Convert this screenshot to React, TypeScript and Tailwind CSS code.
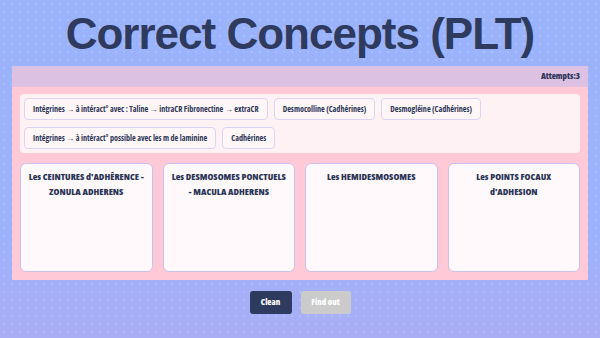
const poolItems = [
  'Intégrines → à intéract° avec : Taline → intraCR Fibronectine → extraCR',
  'Desmocolline (Cadhérines)',
  'Desmogléine (Cadhérines)',
  'Intégrines → à intéract° possible avec les m de laminine',
  'Cadhérines',
];

const targets = [
  "Les CEINTURES d'ADHÊRENCE - ZONULA ADHERENS",
  'Les DESMOSOMES PONCTUELS - MACULA ADHERENS',
  'Les HEMIDESMOSOMES',
  "Les POINTS FOCAUX d'ADHESION",
];

export default function App() {
  return (
    <div className="min-h-[338px] w-full bg-[radial-gradient(circle,rgba(255,255,255,0.14)_1.2px,transparent_1.6px),linear-gradient(to_bottom,#9ab3fd,#9db2fc_70%,#aaaef4)] bg-[length:8px_8px,100%_100%] pt-3 pb-5 font-['Open_Sans',sans-serif] font-stretch-condensed text-[#2b3556]">
      <h1 className="text-center font-['Liberation_Sans',Arial,sans-serif] text-[44px] font-bold leading-[44px] tracking-[-1px] text-[#2e3a5e] [font-stretch:normal]">
        Correct Concepts (PLT)
      </h1>

      <div className="mx-3 mt-2.5 bg-[#ffc9d7]">
        <div className="flex h-[21px] items-center justify-end bg-[#dcc1e3] px-2 text-[8.5px] font-extrabold">
          Attempts:3
        </div>

        <div className="p-2 pt-[7px]">
          <div className="flex flex-wrap gap-x-[6px] gap-y-[7px] rounded-[4px] bg-[#fff2f5] px-1 py-[4px]">
            {poolItems.map((item) => (
              <div
                key={item}
                className="flex h-[22px] items-center rounded-[4px] border border-[#dcd5f0] bg-[#fff6f8] px-[8px] text-[8.1px] font-bold whitespace-nowrap"
              >
                {item}
              </div>
            ))}
          </div>

          <div className="mt-[10px] grid grid-cols-4 gap-[10px]">
            {targets.map((t) => (
              <div
                key={t}
                className="h-[109px] rounded-[6px] border border-[#c9c3ec] bg-[#fff9fc] px-[6.5px] pt-[5px] text-center text-[9.5px] font-extrabold leading-[15px]"
              >
                {t}
              </div>
            ))}
          </div>
        </div>
      </div>

      <div className="mt-[11px] flex justify-center gap-[9px]">
        <button className="h-[23px] w-[42px] rounded-[3px] bg-[#2e3a5e] text-[8.5px] font-extrabold text-white">
          Clean
        </button>
        <button className="h-[23px] w-[50px] rounded-[3px] bg-[#cbcbcb] text-[8.5px] font-extrabold text-white">
          Find out
        </button>
      </div>
    </div>
  );
}
